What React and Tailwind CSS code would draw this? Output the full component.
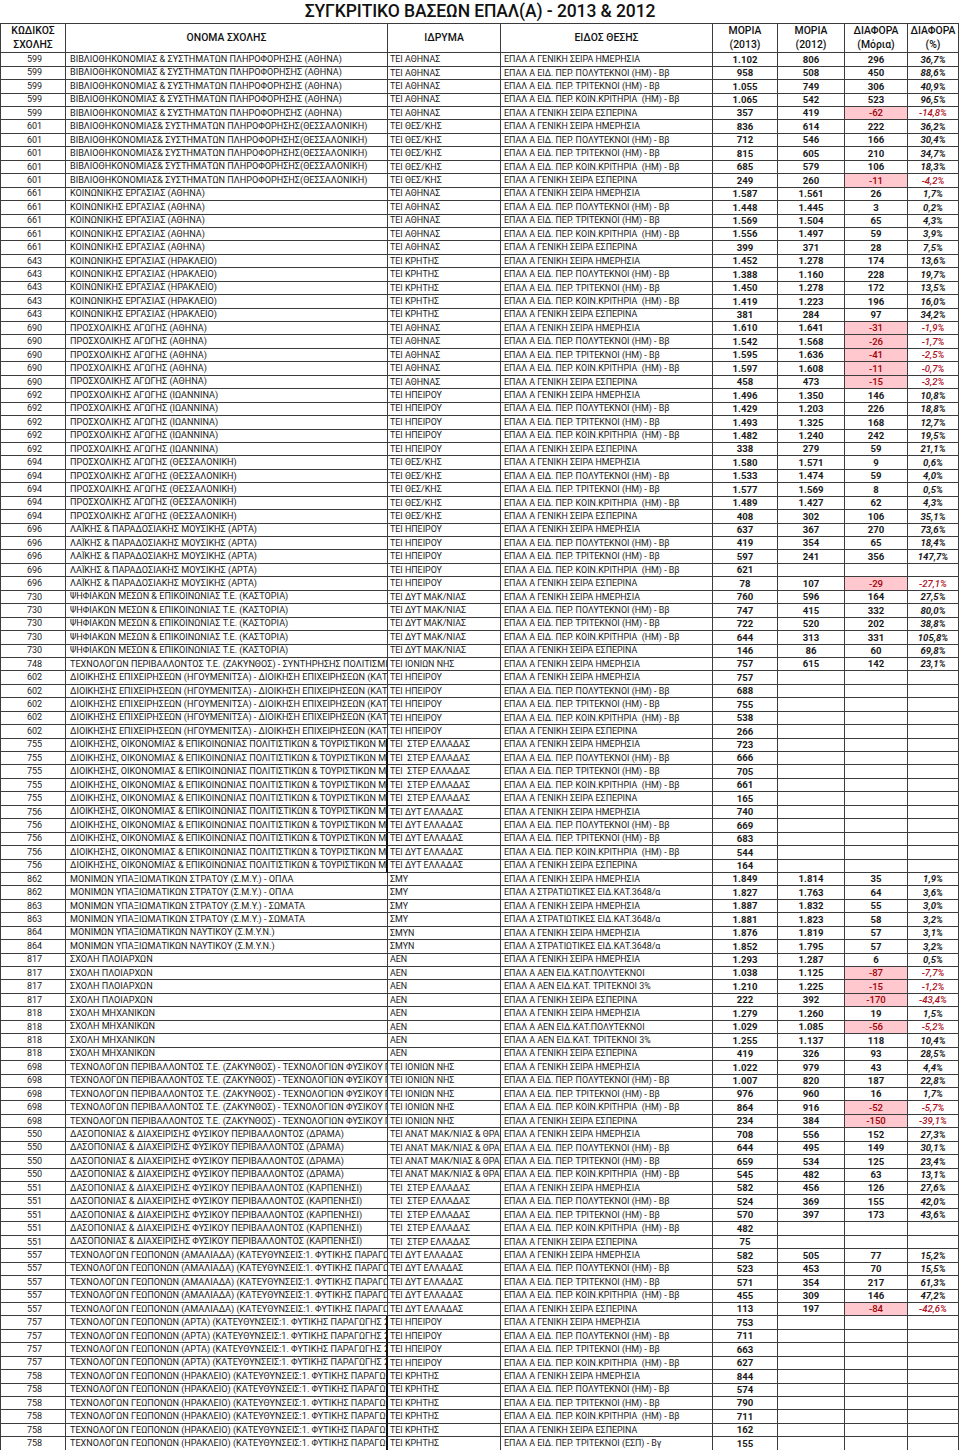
import React from 'react';

const H = 'ΕΠΑΛ Α ΓΕΝΙΚΗ ΣΕΙΡΑ ΗΜΕΡΗΣΙΑ';
const P = 'ΕΠΑΛ Α ΕΙΔ. ΠΕΡ. ΠΟΛΥΤΕΚΝΟΙ (ΗΜ) - Ββ';
const T = 'ΕΠΑΛ Α ΕΙΔ. ΠΕΡ. ΤΡΙΤΕΚΝΟΙ (ΗΜ) - Ββ';
const K = 'ΕΠΑΛ Α ΕΙΔ. ΠΕΡ. ΚΟΙΝ.ΚΡΙΤΗΡΙΑ  (ΗΜ) - Ββ';
const E = 'ΕΠΑΛ Α ΓΕΝΙΚΗ ΣΕΙΡΑ ΕΣΠΕΡΙΝΑ';
const S = 'ΕΠΑΛ Α ΣΤΡΑΤΙΩΤΙΚΕΣ ΕΙΔ.ΚΑΤ.3648/α';
const AP = 'ΕΠΑΛ Α ΑΕΝ ΕΙΔ.ΚΑΤ.ΠΟΛΥΤΕΚΝΟΙ';
const AT = 'ΕΠΑΛ Α ΑΕΝ ΕΙΔ.ΚΑΤ. ΤΡΙΤΕΚΝΟΙ 3%';
const TE = 'ΕΠΑΛ Α ΕΙΔ. ΠΕΡ. ΤΡΙΤΕΚΝΟΙ (ΕΣΠ) - Βγ';

const groups = [
  ['599', 'ΒΙΒΛΙΟΘΗΚΟΝΟΜΙΑΣ & ΣΥΣΤΗΜΑΤΩΝ ΠΛΗΡΟΦΟΡΗΣΗΣ (ΑΘΗΝΑ)', 'ΤΕΙ ΑΘΗΝΑΣ', false, [
    [H, '1.102', '806', '296', '36,7%'], [P, '958', '508', '450', '88,6%'], [T, '1.055', '749', '306', '40,9%'], [K, '1.065', '542', '523', '96,5%'], [E, '357', '419', '-62', '-14,8%']]],
  ['601', 'ΒΙΒΛΙΟΘΗΚΟΝΟΜΙΑΣ& ΣΥΣΤΗΜΑΤΩΝ ΠΛΗΡΟΦΟΡΗΣΗΣ(ΘΕΣΣΑΛΟΝΙΚΗ)', 'ΤΕΙ ΘΕΣ/ΚΗΣ', false, [
    [H, '836', '614', '222', '36,2%'], [P, '712', '546', '166', '30,4%'], [T, '815', '605', '210', '34,7%'], [K, '685', '579', '106', '18,3%'], [E, '249', '260', '-11', '-4,2%']]],
  ['661', 'ΚΟΙΝΩΝΙΚΗΣ ΕΡΓΑΣΙΑΣ (ΑΘΗΝΑ)', 'ΤΕΙ ΑΘΗΝΑΣ', false, [
    [H, '1.587', '1.561', '26', '1,7%'], [P, '1.448', '1.445', '3', '0,2%'], [T, '1.569', '1.504', '65', '4,3%'], [K, '1.556', '1.497', '59', '3,9%'], [E, '399', '371', '28', '7,5%']]],
  ['643', 'ΚΟΙΝΩΝΙΚΗΣ ΕΡΓΑΣΙΑΣ (ΗΡΑΚΛΕΙΟ)', 'ΤΕΙ ΚΡΗΤΗΣ', false, [
    [H, '1.452', '1.278', '174', '13,6%'], [P, '1.388', '1.160', '228', '19,7%'], [T, '1.450', '1.278', '172', '13,5%'], [K, '1.419', '1.223', '196', '16,0%'], [E, '381', '284', '97', '34,2%']]],
  ['690', 'ΠΡΟΣΧΟΛΙΚΗΣ ΑΓΩΓΗΣ (ΑΘΗΝΑ)', 'ΤΕΙ ΑΘΗΝΑΣ', false, [
    [H, '1.610', '1.641', '-31', '-1,9%'], [P, '1.542', '1.568', '-26', '-1,7%'], [T, '1.595', '1.636', '-41', '-2,5%'], [K, '1.597', '1.608', '-11', '-0,7%'], [E, '458', '473', '-15', '-3,2%']]],
  ['692', 'ΠΡΟΣΧΟΛΙΚΗΣ ΑΓΩΓΗΣ (ΙΩΑΝΝΙΝΑ)', 'ΤΕΙ ΗΠΕΙΡΟΥ', false, [
    [H, '1.496', '1.350', '146', '10,8%'], [P, '1.429', '1.203', '226', '18,8%'], [T, '1.493', '1.325', '168', '12,7%'], [K, '1.482', '1.240', '242', '19,5%'], [E, '338', '279', '59', '21,1%']]],
  ['694', 'ΠΡΟΣΧΟΛΙΚΗΣ ΑΓΩΓΗΣ (ΘΕΣΣΑΛΟΝΙΚΗ)', 'ΤΕΙ ΘΕΣ/ΚΗΣ', false, [
    [H, '1.580', '1.571', '9', '0,6%'], [P, '1.533', '1.474', '59', '4,0%'], [T, '1.577', '1.569', '8', '0,5%'], [K, '1.489', '1.427', '62', '4,3%'], [E, '408', '302', '106', '35,1%']]],
  ['696', 'ΛΑΪΚΗΣ & ΠΑΡΑΔΟΣΙΑΚΗΣ ΜΟΥΣΙΚΗΣ (ΑΡΤΑ)', 'ΤΕΙ ΗΠΕΙΡΟΥ', false, [
    [H, '637', '367', '270', '73,6%'], [P, '419', '354', '65', '18,4%'], [T, '597', '241', '356', '147,7%'], [K, '621', '', '', ''], [E, '78', '107', '-29', '-27,1%']]],
  ['730', 'ΨΗΦΙΑΚΩΝ ΜΕΣΩΝ & ΕΠΙΚΟΙΝΩΝΙΑΣ Τ.Ε. (ΚΑΣΤΟΡΙΑ)', 'ΤΕΙ ΔΥΤ ΜΑΚ/ΝΙΑΣ', false, [
    [H, '760', '596', '164', '27,5%'], [P, '747', '415', '332', '80,0%'], [T, '722', '520', '202', '38,8%'], [K, '644', '313', '331', '105,8%'], [E, '146', '86', '60', '69,8%']]],
  ['748', 'ΤΕΧΝΟΛΟΓΩΝ ΠΕΡΙΒΑΛΛΟΝΤΟΣ Τ.Ε. (ΖΑΚΥΝΘΟΣ) - ΣΥΝΤΗΡΗΣΗΣ ΠΟΛΙΤΙΣΜΙΚ', 'ΤΕΙ ΙΟΝΙΩΝ ΝΗΣ', false, [
    [H, '757', '615', '142', '23,1%']]],
  ['602', 'ΔΙΟΙΚΗΣΗΣ ΕΠΙΧΕΙΡΗΣΕΩΝ (ΗΓΟΥΜΕΝΙΤΣΑ) - ΔΙΟΙΚΗΣΗ ΕΠΙΧΕΙΡΗΣΕΩΝ (ΚΑΤΕΥ', 'ΤΕΙ ΗΠΕΙΡΟΥ', false, [
    [H, '757'], [P, '688'], [T, '755'], [K, '538'], [E, '266']]],
  ['755', 'ΔΙΟΙΚΗΣΗΣ, ΟΙΚΟΝΟΜΙΑΣ & ΕΠΙΚΟΙΝΩΝΙΑΣ ΠΟΛΙΤΙΣΤΙΚΩΝ & ΤΟΥΡΙΣΤΙΚΩΝ Μ', 'ΤΕΙ  ΣΤΕΡ ΕΛΛΑΔΑΣ', true, [
    [H, '723'], [P, '666'], [T, '705'], [K, '661'], [E, '165']]],
  ['756', 'ΔΙΟΙΚΗΣΗΣ, ΟΙΚΟΝΟΜΙΑΣ & ΕΠΙΚΟΙΝΩΝΙΑΣ ΠΟΛΙΤΙΣΤΙΚΩΝ & ΤΟΥΡΙΣΤΙΚΩΝ Μ', 'ΤΕΙ ΔΥΤ ΕΛΛΑΔΑΣ', true, [
    [H, '740'], [P, '669'], [T, '683'], [K, '544'], [E, '164']]],
  ['862', 'ΜΟΝΙΜΩΝ ΥΠΑΞΙΩΜΑΤΙΚΩΝ ΣΤΡΑΤΟΥ (Σ.Μ.Υ.) - ΟΠΛΑ', 'ΣΜΥ', false, [
    [H, '1.849', '1.814', '35', '1,9%'], [S, '1.827', '1.763', '64', '3,6%']]],
  ['863', 'ΜΟΝΙΜΩΝ ΥΠΑΞΙΩΜΑΤΙΚΩΝ ΣΤΡΑΤΟΥ (Σ.Μ.Υ.) - ΣΩΜΑΤΑ', 'ΣΜΥ', false, [
    [H, '1.887', '1.832', '55', '3,0%'], [S, '1.881', '1.823', '58', '3,2%']]],
  ['864', 'ΜΟΝΙΜΩΝ ΥΠΑΞΙΩΜΑΤΙΚΩΝ ΝΑΥΤΙΚΟΥ (Σ.Μ.Υ.Ν.)', 'ΣΜΥΝ', false, [
    [H, '1.876', '1.819', '57', '3,1%'], [S, '1.852', '1.795', '57', '3,2%']]],
  ['817', 'ΣΧΟΛΗ ΠΛΟΙΑΡΧΩΝ', 'ΑΕΝ', false, [
    [H, '1.293', '1.287', '6', '0,5%'], [AP, '1.038', '1.125', '-87', '-7,7%'], [AT, '1.210', '1.225', '-15', '-1,2%'], [E, '222', '392', '-170', '-43,4%']]],
  ['818', 'ΣΧΟΛΗ ΜΗΧΑΝΙΚΩΝ', 'ΑΕΝ', false, [
    [H, '1.279', '1.260', '19', '1,5%'], [AP, '1.029', '1.085', '-56', '-5,2%'], [AT, '1.255', '1.137', '118', '10,4%'], [E, '419', '326', '93', '28,5%']]],
  ['698', 'ΤΕΧΝΟΛΟΓΩΝ ΠΕΡΙΒΑΛΛΟΝΤΟΣ Τ.Ε. (ΖΑΚΥΝΘΟΣ) - ΤΕΧΝΟΛΟΓΙΩΝ ΦΥΣΙΚΟΥ Π', 'ΤΕΙ ΙΟΝΙΩΝ ΝΗΣ', false, [
    [H, '1.022', '979', '43', '4,4%'], [P, '1.007', '820', '187', '22,8%'], [T, '976', '960', '16', '1,7%'], [K, '864', '916', '-52', '-5,7%'], [E, '234', '384', '-150', '-39,1%']]],
  ['550', 'ΔΑΣΟΠΟΝΙΑΣ & ΔΙΑΧΕΙΡΙΣΗΣ ΦΥΣΙΚΟΥ ΠΕΡΙΒΑΛΛΟΝΤΟΣ (ΔΡΑΜΑ)', 'ΤΕΙ ΑΝΑΤ ΜΑΚ/ΝΙΑΣ & ΘΡΑ', false, [
    [H, '708', '556', '152', '27,3%'], [P, '644', '495', '149', '30,1%'], [T, '659', '534', '125', '23,4%'], [K, '545', '482', '63', '13,1%']]],
  ['551', 'ΔΑΣΟΠΟΝΙΑΣ & ΔΙΑΧΕΙΡΙΣΗΣ ΦΥΣΙΚΟΥ ΠΕΡΙΒΑΛΛΟΝΤΟΣ (ΚΑΡΠΕΝΗΣΙ)', 'ΤΕΙ  ΣΤΕΡ ΕΛΛΑΔΑΣ', false, [
    [H, '582', '456', '126', '27,6%'], [P, '524', '369', '155', '42,0%'], [T, '570', '397', '173', '43,6%'], [K, '482'], [E, '75']]],
  ['557', 'ΤΕΧΝΟΛΟΓΩΝ ΓΕΩΠΟΝΩΝ (ΑΜΑΛΙΑΔΑ) (ΚΑΤΕΥΘΥΝΣΕΙΣ:1. ΦΥΤΙΚΗΣ ΠΑΡΑΓΩ', 'ΤΕΙ ΔΥΤ ΕΛΛΑΔΑΣ', false, [
    [H, '582', '505', '77', '15,2%'], [P, '523', '453', '70', '15,5%'], [T, '571', '354', '217', '61,3%'], [K, '455', '309', '146', '47,2%'], [E, '113', '197', '-84', '-42,6%']]],
  ['757', 'ΤΕΧΝΟΛΟΓΩΝ ΓΕΩΠΟΝΩΝ (ΑΡΤΑ) (ΚΑΤΕΥΘΥΝΣΕΙΣ:1. ΦΥΤΙΚΗΣ ΠΑΡΑΓΩΓΗΣ 2.', 'ΤΕΙ ΗΠΕΙΡΟΥ', true, [
    [H, '753'], [P, '711'], [T, '663'], [K, '627']]],
  ['758', 'ΤΕΧΝΟΛΟΓΩΝ ΓΕΩΠΟΝΩΝ (ΗΡΑΚΛΕΙΟ) (ΚΑΤΕΥΘΥΝΣΕΙΣ:1. ΦΥΤΙΚΗΣ ΠΑΡΑΓΩΓ', 'ΤΕΙ ΚΡΗΤΗΣ', true, [
    [H, '844'], [P, '574'], [T, '790'], [K, '711'], [E, '162'], [TE, '155']]],
];

const rows = [];
groups.forEach(([code, name, inst, thick, list]) => {
  list.forEach((r) => rows.push({ code, name, inst, thick, type: r[0], m13: r[1] || '', m12: r[2] || '', diff: r[3] || '', pct: r[4] || '' }));
});

const GRID = 'grid grid-cols-[66px_322px_113px_212px_65px_67px_63px_51px]';
const cell = 'border-r border-b border-[#3c3c3c] overflow-hidden whitespace-pre flex items-center';

function Row({ r }) {
  const neg = r.diff.startsWith('-');
  return (
    <div className={`${GRID} h-[13.44px] text-[8.9px] leading-none text-[#1a1a1a]`}>
      <div className={`${cell} border-l justify-center text-[9px] pl-[3px]`}>{r.code}</div>
      <div className={`${cell} pl-[4px] text-[9.1px] ${r.thick ? 'border-r-[2px] border-r-[#111]' : ''}`}>{r.name}</div>
      <div className={`${cell} pl-[2px]`}>{r.inst}</div>
      <div className={`${cell} pl-[3px]`}>{r.type}</div>
      <div className={`${cell} justify-center font-bold text-[9.6px]`}>{r.m13}</div>
      <div className={`${cell} justify-center font-bold text-[9.6px]`}>{r.m12}</div>
      <div className={`${cell} justify-center font-bold text-[9.6px] ${neg ? 'bg-[#ffc7ce] text-[#9c0006] font-medium' : ''}`}>{r.diff}</div>
      <div className={`${cell} justify-center font-bold italic text-[9.6px] ${neg ? 'text-[#b0101e] font-medium' : ''}`}>{r.pct}</div>
    </div>
  );
}

export default function App() {
  const hc = 'border-r border-b border-t border-[#3c3c3c] flex flex-col items-center justify-center text-center leading-[14px]';
  return (
    <div className="w-[960px] bg-white font-[Roboto,'Liberation_Sans',sans-serif] text-black">
      <div className="h-[23px] flex items-center justify-center text-[17.5px] font-medium tracking-[-0.1px] text-[#111]">
        ΣΥΓΚΡΙΤΙΚΟ ΒΑΣΕΩΝ ΕΠΑΛ(Α) - 2013 &amp; 2012
      </div>
      <div className={`${GRID} h-[30.3px] text-[10.4px] font-medium text-[#111]`}>
        <div className={`${hc} border-l`}><span>ΚΩΔΙΚΟΣ</span><span>ΣΧΟΛΗΣ</span></div>
        <div className={hc}><span>ΟΝΟΜΑ ΣΧΟΛΗΣ</span></div>
        <div className={hc}><span>ΙΔΡΥΜΑ</span></div>
        <div className={hc}><span>ΕΙΔΟΣ ΘΕΣΗΣ</span></div>
        <div className={hc}><span>ΜΟΡΙΑ</span><span>(2013)</span></div>
        <div className={hc}><span>ΜΟΡΙΑ</span><span>(2012)</span></div>
        <div className={hc}><span>ΔΙΑΦΟΡΑ</span><span>(Μόρια)</span></div>
        <div className={hc}><span>ΔΙΑΦΟΡΑ</span><span>(%)</span></div>
      </div>
      {rows.map((r, i) => (
        <Row key={i} r={r} />
      ))}
    </div>
  );
}
